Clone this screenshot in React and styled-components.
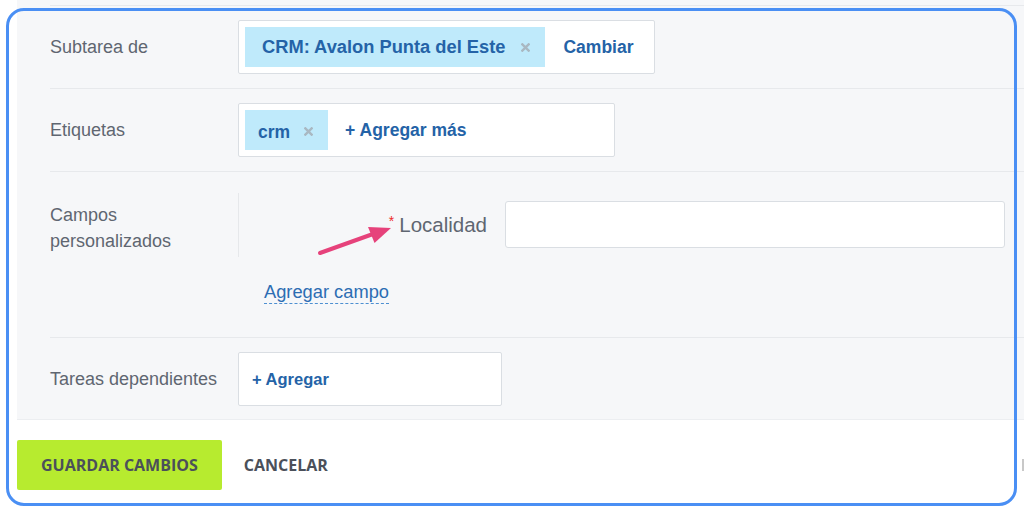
import React from "react";
import styled, { createGlobalStyle } from "styled-components";

const Global = createGlobalStyle`
  html, body { margin: 0; padding: 0; background: #ffffff; }
  body { font-family: "Liberation Sans", Arial, sans-serif; overflow: hidden; }
  * { box-sizing: border-box; }
`;

const Page = styled.div`
  position: relative;
  width: 1024px;
  height: 512px;
  overflow: hidden;
  background: #fff;
`;

const Panel = styled.div`
  margin-left: 17px;
  padding-top: 5px;
  background: #f6f7f9;
  border-bottom: 1px solid #eceef1;
`;

const Row = styled.div`
  position: relative;
  margin-left: 33px;
  border-top: 1px solid #e7e9ec;
  display: grid;
  grid-template-columns: 188px 1fr;
  align-items: ${(p) => (p.$top ? "start" : "center")};
  padding: ${(p) => p.$pad || "14px 0"};
`;

const Label = styled.div`
  font-size: 18px;
  line-height: 26px;
  color: #5f6671;
  padding-top: ${(p) => p.$pt || "0"};
`;

const Box = styled.div`
  width: ${(p) => p.$w}px;
  height: 54px;
  background: #fff;
  border: 1px solid #dadee3;
  border-radius: 2px;
  display: flex;
  align-items: center;
  padding: 0 6px;
  gap: ${(p) => p.$gap || 0}px;
`;

const Chip = styled.div`
  height: 40px;
  background: #bfeafb;
  display: flex;
  align-items: center;
  padding: 0 15px 0 ${(p) => p.$pl || 17}px;
  gap: ${(p) => p.$gap}px;
  color: #2463a7;
  font-weight: 700;
  font-size: ${(p) => p.$fs || 17.5}px;
`;

const ChipText = styled.span`
  line-height: 1;
  padding-top: ${(p) => p.$pt || 0}px;
`;

const X = styled.span`
  display: inline-flex;
  color: #a9b8c2;
  padding-top: ${(p) => p.$pt || 0}px;
`;

const LinkBold = styled.span`
  color: #2463a7;
  font-weight: 700;
  font-size: ${(p) => p.$fs || 17.5}px;
  padding-left: ${(p) => p.$pl || 0}px;
`;

const FieldsBlock = styled.div`
  margin-top: 21px;
  border-left: 1px solid #e6e8eb;
  padding: 8px 0 9px 0;
  display: flex;
  align-items: center;
`;

const FieldLabel = styled.div`
  width: 266px;
  padding-right: 18px;
  text-align: right;
  font-size: 20.5px;
  color: #5f6671;
`;

const Req = styled.span`
  color: #ee2b2b;
  font-size: 14px;
  vertical-align: 6px;
  margin-right: 5px;
`;

const Input = styled.div`
  width: 500px;
  height: 47px;
  background: #fff;
  border: 1px solid #dadee3;
  border-radius: 3px;
`;

const AddField = styled.a`
  display: inline-block;
  margin: 24px 0 0 26px;
  font-size: 18.3px;
  line-height: 22px;
  color: #2c6db3;
  text-decoration: none;
  border-bottom: 1px dashed #4d8fd1;
`;

const Content = styled.div``;

const Arrow = styled.svg`
  position: absolute;
  left: 265px;
  top: 50px;
  pointer-events: none;
`;

const Footer = styled.div`
  display: flex;
  align-items: center;
  padding: 20px 0 0 17px;
  gap: 22px;
`;

const Button = styled.button`
  height: 50px;
  padding: 0 ${(p) => p.$px}px;
  border: none;
  border-radius: 2px;
  background: ${(p) => (p.$primary ? "#b7eb2f" : "transparent")};
  color: #4b505a;
  font-family: "Open Sans", "Liberation Sans", sans-serif;
  font-weight: 700;
  font-size: 16px;
  text-transform: uppercase;
  cursor: pointer;
`;

const EdgeMark = styled.div`
  margin-left: auto;
  width: 2px;
  height: 12px;
  background: #c8c8c8;
`;

const Frame = styled.div`
  position: absolute;
  left: 6px;
  top: 8px;
  width: 1011px;
  height: 498px;
  border: 3px solid #4a8ff4;
  border-radius: 18px;
  pointer-events: none;
`;

const Cross = ({ size = 9 }) => (
  <svg width={size} height={size} viewBox="0 0 10 10">
    <path d="M1.5 1.5 L8.5 8.5 M8.5 1.5 L1.5 8.5" stroke="currentColor" strokeWidth="2.6" strokeLinecap="square" />
  </svg>
);

export default function App() {
  return (
    <Page>
      <Global />
      <Panel>
        <Row>
          <Label>Subtarea de</Label>
          <Box $w={417} $gap={18}>
            <Chip $gap={16} $fs={18.3}>
              <ChipText>CRM: Avalon Punta del Este</ChipText>
              <X><Cross /></X>
            </Chip>
            <LinkBold>Cambiar</LinkBold>
          </Box>
        </Row>
        <Row>
          <Label>Etiquetas</Label>
          <Box $w={377} $gap={17}>
            <Chip $gap={14} $pl={13}>
              <ChipText $pt={6}>crm</ChipText>
              <X $pt={2}><Cross /></X>
            </Chip>
            <LinkBold>+ Agregar más</LinkBold>
          </Box>
        </Row>
        <Row $top $pad="0 0 33px 0">
          <Label $pt="30px">Campos<br />personalizados</Label>
          <Content>
            <FieldsBlock>
              <FieldLabel><Req>*</Req>Localidad</FieldLabel>
              <Input />
            </FieldsBlock>
            <AddField>Agregar campo</AddField>
          </Content>
          <Arrow width="90" height="40" viewBox="0 0 90 40">
            <path d="M5 31 L58 12" stroke="#e6427b" strokeWidth="4" strokeLinecap="round" />
            <path d="M76 6 L53 5 L59.5 21 Z" fill="#e6427b" />
          </Arrow>
        </Row>
        <Row $pad="14px 0 13px 0">
          <Label>Tareas dependientes</Label>
          <Box $w={264}>
            <LinkBold $fs={16.5} $pl={7}>+ Agregar</LinkBold>
          </Box>
        </Row>
      </Panel>
      <Footer>
        <Button $primary $px={24}>Guardar cambios</Button>
        <Button $px={0}>Cancelar</Button>
        <EdgeMark />
      </Footer>
      <Frame />
    </Page>
  );
}
